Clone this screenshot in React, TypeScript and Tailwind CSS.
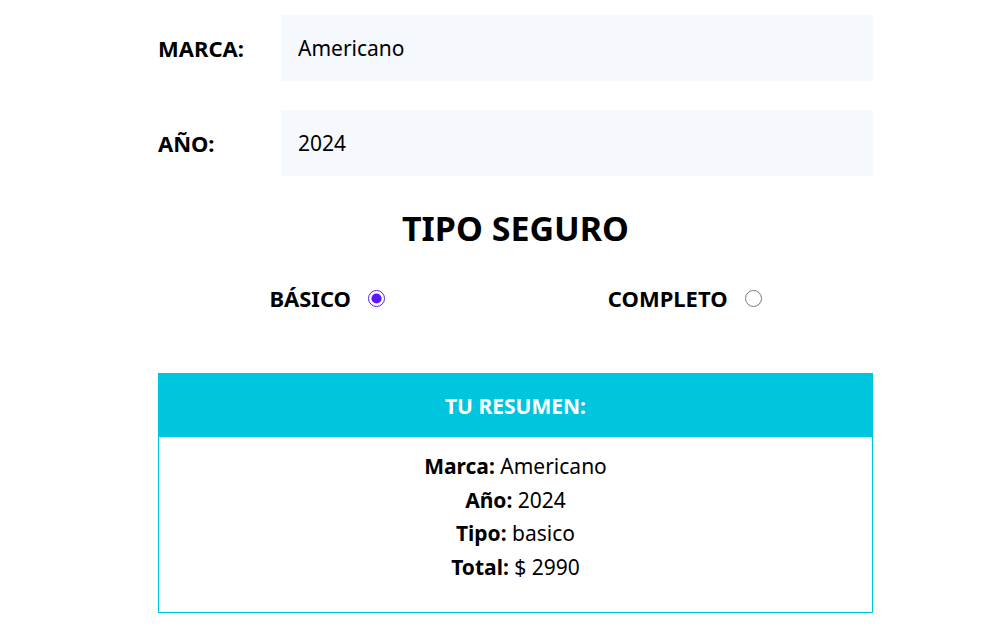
import { useState } from 'react'

const font = { fontFamily: '"Noto Sans", "Open Sans", sans-serif' }

const App = () => {
  const [tipo, setTipo] = useState('basico')

  return (
    <div className="bg-white min-h-[641px] pt-[15px]" style={font}>
      <div className="ml-[158px] w-[715px] flex flex-col">
        <div className="flex items-center">
          <label className="w-[123px] text-[22px] font-bold text-black leading-none">MARCA:</label>
          <input
            type="text"
            defaultValue="Americano"
            className="flex-1 h-[66px] px-[17px] bg-[#f5f8fc] text-[21px] text-black outline-none"
          />
        </div>
        <div className="flex items-center mt-[29px]">
          <label className="w-[123px] text-[22px] font-bold text-black leading-none">AÑO:</label>
          <input
            type="text"
            defaultValue="2024"
            className="flex-1 h-[66px] px-[17px] bg-[#f5f8fc] text-[21px] text-black outline-none"
          />
        </div>

        <h2 className="mt-[31px] text-center text-[34px] font-bold text-black leading-[42px]">TIPO SEGURO</h2>

        <div className="flex justify-around items-center mt-[33px]">
          <label className="flex items-center gap-[17px] text-[22px] font-bold text-black">
            BÁSICO
            <input
              type="radio"
              name="tipo"
              checked={tipo === 'basico'}
              onChange={() => setTipo('basico')}
              className="w-[17px] h-[17px] m-0 accent-[#5a18ff]"
            />
          </label>
          <label className="flex items-center gap-[17px] text-[22px] font-bold text-black">
            COMPLETO
            <input
              type="radio"
              name="tipo"
              checked={tipo === 'completo'}
              onChange={() => setTipo('completo')}
              className="w-[17px] h-[17px] m-0 accent-[#5a18ff]"
            />
          </label>
        </div>

        <div className="mt-[58px] border border-[#00c5de]">
          <div className="bg-[#00c5de] h-[63px] pt-[3px] flex items-center justify-center text-white text-[21px] font-bold">
            TU RESUMEN:
          </div>
          <div className="pt-[13px] pb-[28px] flex flex-col items-center text-[21px] leading-[33.5px] text-black">
            <p><span className="font-bold">Marca:</span> Americano</p>
            <p><span className="font-bold">Año:</span> 2024</p>
            <p><span className="font-bold">Tipo:</span> {tipo}</p>
            <p><span className="font-bold">Total:</span> $ 2990</p>
          </div>
        </div>
      </div>
    </div>
  )
}

export default App
